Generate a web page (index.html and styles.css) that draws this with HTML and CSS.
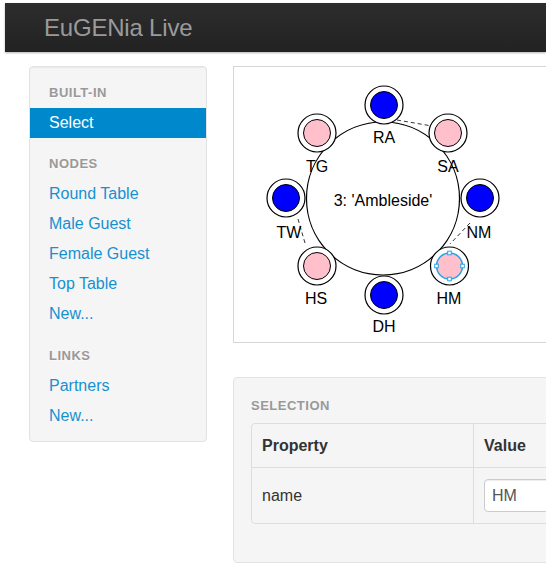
FILE: index.html
```html
<!DOCTYPE html>
<html lang="en">
<head>
<meta charset="utf-8">
<title>EuGENia Live</title>
<link rel="stylesheet" href="styles.css">
</head>
<body>
<header class="navbar">
  <span class="brand">EuGENia Live</span>
</header>

<div class="layout">
  <nav class="sidebar">
    <div class="nav-header first">Built-in</div>
    <a class="nav-link active" href="#">Select</a>
    <div class="nav-header">Nodes</div>
    <a class="nav-link" href="#">Round Table</a>
    <a class="nav-link" href="#">Male Guest</a>
    <a class="nav-link" href="#">Female Guest</a>
    <a class="nav-link" href="#">Top Table</a>
    <a class="nav-link" href="#">New...</a>
    <div class="nav-header links-header">Links</div>
    <a class="nav-link" href="#">Partners</a>
    <a class="nav-link" href="#">New...</a>
  </nav>

  <main class="content">
    <div class="canvas">
      <svg class="diagram" width="340" height="275" viewBox="234 67 340 275">
        <g class="links" stroke="#333" stroke-width="1" stroke-dasharray="4 3" fill="none">
          <line x1="397" y1="120" x2="432" y2="126"/>
          <line x1="298" y1="219" x2="305" y2="243"/>
          <line x1="470" y1="223" x2="450" y2="244"/>
        </g>

        <circle cx="383" cy="198.5" r="76.5" fill="#fff" stroke="#000" stroke-width="1.2"/>
        <text class="table-name" x="383" y="206" text-anchor="middle">3: 'Ambleside'</text>

        <g class="guest" transform="translate(384 105)">
          <circle r="19" fill="#fff" stroke="#000" stroke-width="1.2"/>
          <circle r="13.5" fill="#0000ff" stroke="#000" stroke-width="1"/>
        </g>
        <g class="guest" transform="translate(448 133)">
          <circle r="19" fill="#fff" stroke="#000" stroke-width="1.2"/>
          <circle r="13.5" fill="#ffc0cb" stroke="#000" stroke-width="1"/>
        </g>
        <g class="guest" transform="translate(480 198)">
          <circle r="19" fill="#fff" stroke="#000" stroke-width="1.2"/>
          <circle r="13.5" fill="#0000ff" stroke="#000" stroke-width="1"/>
        </g>
        <g class="guest selected" transform="translate(449.5 266)">
          <circle r="19" fill="#fff" stroke="#000" stroke-width="1.2"/>
          <circle r="13" fill="#ffc0cb" stroke="#29a3e6" stroke-width="1.5"/>
          <rect x="-1.8" y="-14.8" width="3.6" height="3.6" fill="#fff" stroke="#29a3e6" stroke-width="1"/>
          <rect x="11.2" y="-1.8" width="3.6" height="3.6" fill="#fff" stroke="#29a3e6" stroke-width="1"/>
          <rect x="-1.8" y="11.2" width="3.6" height="3.6" fill="#fff" stroke="#29a3e6" stroke-width="1"/>
          <rect x="-14.8" y="-1.8" width="3.6" height="3.6" fill="#fff" stroke="#29a3e6" stroke-width="1"/>
        </g>
        <g class="guest" transform="translate(384 295)">
          <circle r="19" fill="#fff" stroke="#000" stroke-width="1.2"/>
          <circle r="13.5" fill="#0000ff" stroke="#000" stroke-width="1"/>
        </g>
        <g class="guest" transform="translate(317 266)">
          <circle r="19" fill="#fff" stroke="#000" stroke-width="1.2"/>
          <circle r="13.5" fill="#ffc0cb" stroke="#000" stroke-width="1"/>
        </g>
        <g class="guest" transform="translate(286 198)">
          <circle r="19" fill="#fff" stroke="#000" stroke-width="1.2"/>
          <circle r="13.5" fill="#0000ff" stroke="#000" stroke-width="1"/>
        </g>
        <g class="guest" transform="translate(317 133)">
          <circle r="19" fill="#fff" stroke="#000" stroke-width="1.2"/>
          <circle r="13.5" fill="#ffc0cb" stroke="#000" stroke-width="1"/>
        </g>

        <g class="labels" text-anchor="middle">
          <text x="384" y="143">RA</text>
          <text x="448" y="172">SA</text>
          <text x="479" y="238">NM</text>
          <text x="449" y="304">HM</text>
          <text x="384" y="332">DH</text>
          <text x="316" y="304">HS</text>
          <text x="289" y="238">TW</text>
          <text x="317" y="172">TG</text>
        </g>
      </svg>
    </div>

    <section class="selection">
      <div class="section-header">Selection</div>
      <table class="props">
        <thead>
          <tr><th class="col-prop">Property</th><th class="col-val">Value</th></tr>
        </thead>
        <tbody>
          <tr><td class="col-prop">name</td><td class="col-val"><input class="field" type="text" value="HM"></td></tr>
        </tbody>
      </table>
    </section>
  </main>
</div>
</body>
</html>
```

FILE: styles.css
```css
html, body {
  margin: 0;
  padding: 0;
  background: #fff;
  overflow: hidden;
}

body {
  width: 546px;
  height: 563px;
  font-family: "Liberation Sans", Arial, Helvetica, sans-serif;
  color: #333;
}

/* top bar */
.navbar {
  margin: 3px 0 0 5px;
  height: 49px;
  display: flex;
  align-items: center;
  padding-left: 39px;
  background: linear-gradient(#2d2d2d, #222);
  box-shadow: 0 1px 2px rgba(0, 0, 0, 0.3);
}

.brand {
  font-size: 24px;
  color: #9a9a9a;
  letter-spacing: -0.2px;
}

/* page columns */
.layout {
  display: flex;
  align-items: flex-start;
  gap: 26px;
  margin-top: 14px;
  padding-left: 29px;
}

/* tool palette */
.sidebar {
  box-sizing: border-box;
  flex: 0 0 178px;
  width: 178px;
  padding: 16px 0 10px;
  background: #f5f5f5;
  border: 1px solid #e3e3e3;
  border-radius: 4px;
  box-shadow: inset 0 1px 1px rgba(0, 0, 0, 0.05);
}

.nav-header {
  height: 20px;
  line-height: 20px;
  margin: 16px 0 5px;
  padding-left: 19px;
  font-size: 13px;
  font-weight: bold;
  letter-spacing: 0.5px;
  text-transform: uppercase;
  color: #999;
  text-shadow: 0 1px 0 rgba(255, 255, 255, 0.5);
}

.nav-header.first {
  margin-top: 0;
}

.nav-header.links-header {
  margin-top: 17px;
}

.nav-link {
  display: block;
  height: 30px;
  line-height: 30px;
  padding-left: 19px;
  font-size: 16px;
  color: #1591d2;
  text-decoration: none;
}

.nav-link.active {
  background: #0088cc;
  color: #fff;
}

/* right column, clipped at the window edge */
.content {
  flex: 0 0 313px;
  width: 313px;
  overflow: hidden;
}

.canvas {
  box-sizing: border-box;
  width: 340px;
  height: 277px;
  border: 1px solid #d6d6d6;
  background: #fff;
  margin-bottom: 34px;
  overflow: hidden;
}

.diagram {
  display: block;
  font-family: "Liberation Sans", Arial, Helvetica, sans-serif;
  font-size: 16px;
}

.diagram text {
  fill: #000;
}

/* properties panel */
.selection {
  box-sizing: border-box;
  width: 340px;
  height: 186px;
  padding: 18px 0 0 17px;
  background: #f5f5f5;
  border: 1px solid #e3e3e3;
  border-radius: 4px;
  overflow: hidden;
}

.section-header {
  height: 20px;
  line-height: 20px;
  margin-bottom: 7px;
  font-size: 13px;
  font-weight: bold;
  letter-spacing: 0.5px;
  text-transform: uppercase;
  color: #999;
}

.props {
  width: 420px;
  table-layout: fixed;
  border: 1px solid #ddd;
  border-radius: 4px;
  border-collapse: separate;
  border-spacing: 0;
  font-size: 16px;
  color: #333;
}

.props th,
.props td {
  padding: 0 10px;
  text-align: left;
  vertical-align: middle;
}

.props th {
  height: 43px;
  font-weight: bold;
  border-bottom: 1px solid #ddd;
}

.props td {
  height: 55px;
}

.props .col-prop {
  width: 201px;
}

.props .col-val {
  border-left: 1px solid #ddd;
}

.field {
  box-sizing: border-box;
  width: 220px;
  height: 33px;
  margin: 0;
  padding: 0 7px;
  font-family: "Liberation Sans", Arial, Helvetica, sans-serif;
  font-size: 16px;
  color: #555;
  background: #fff;
  border: 1px solid #ccc;
  border-radius: 4px;
  box-shadow: inset 0 1px 1px rgba(0, 0, 0, 0.075);
}
```
